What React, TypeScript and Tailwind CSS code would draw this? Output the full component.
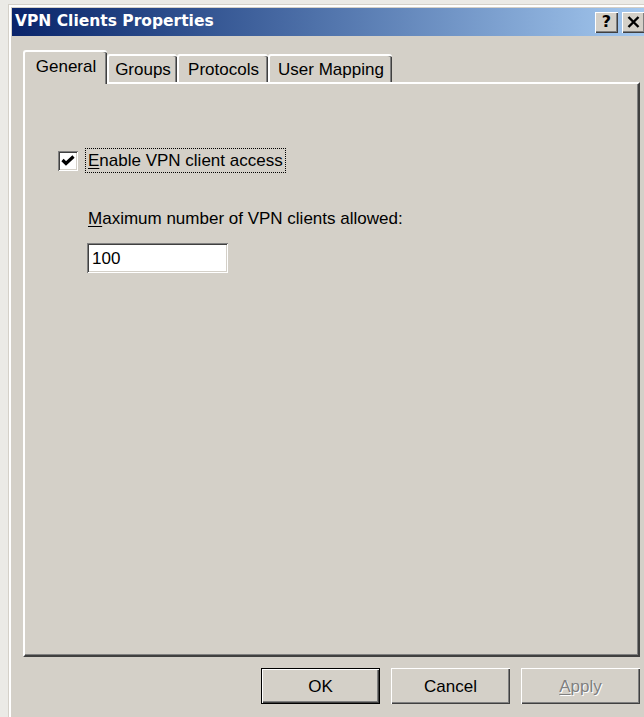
import type { ReactNode } from "react";

// Classic 3D bevels used by the dialog controls
const raised = "shadow-[inset_1px_1px_#ffffff,inset_-1px_-1px_#404040,inset_-2px_-2px_#808080]";
const sunken = "shadow-[inset_1px_1px_#808080,inset_-1px_-1px_#ffffff,inset_2px_2px_#404040,inset_-2px_-2px_#d4d0c8]";

const tabs = [
    { label: "General", width: "w-[84px]", active: true },
    { label: "Groups", width: "w-[70px]", active: false },
    { label: "Protocols", width: "w-[91px]", active: false },
    { label: "User Mapping", width: "w-[124px]", active: false },
];

function CaptionButton({ children }: { children: ReactNode }) {
    return (
        <div className={`flex h-[21px] w-[23px] items-center justify-center bg-[#d4d0c8] ${raised}`}>{children}</div>
    );
}

function Tab({ label, width, active }: { label: string; width: string; active: boolean }) {
    if (active) {
        return (
            <div
                className={`relative z-10 -mb-[2px] h-[34px] ${width} rounded-t-[3px] border-t-2 border-l-2 border-white bg-[#d4d0c8] pt-[6px] text-center leading-[17px] shadow-[inset_-1px_0_#404040,inset_-2px_0_#808080]`}
            >
                {label}
            </div>
        );
    }
    return (
        <div
            className={`h-[28px] ${width} rounded-t-[3px] border-t-2 border-l-2 border-white pt-[5px] text-center leading-[17px] shadow-[inset_-1px_0_#404040,inset_-2px_0_#808080]`}
        >
            {label}
        </div>
    );
}

function DialogButton({ children, isDefault, disabled }: { children: ReactNode; isDefault?: boolean; disabled?: boolean }) {
    return (
        <div
            className={`flex h-[36px] w-[119px] items-center justify-center bg-[#d4d0c8] leading-none ${
                isDefault
                    ? "border border-black shadow-[inset_1px_1px_#ffffff,inset_-1px_-1px_#404040,inset_-2px_-2px_#808080]"
                    : "shadow-[inset_1px_1px_#ffffff,inset_-1px_-1px_#404040,inset_-2px_-2px_#808080]"
            } ${disabled ? "text-[#808080] [text-shadow:1px_1px_0_#ffffff]" : "text-black"}`}
        >
            {children}
        </div>
    );
}

export default function App() {
    return (
        <div className="h-[717px] w-[644px] overflow-hidden bg-[#ebeae6] pt-1 pl-2 font-['Liberation_Sans',Arial,sans-serif] text-[17px] text-black">
            {/* Window frame */}
            <div className="h-[720px] w-[644px] bg-[#d4d0c8] pt-[4px] pl-[4px] shadow-[inset_1px_1px_#d4d0c8,inset_3px_3px_#ffffff]">
                {/* Caption bar */}
                <div className="flex h-[28px] w-[636px] items-center bg-linear-to-r from-[#0a246a] to-[#a6caf0] pr-[3px] pl-[3px]">
                    <span className="flex-1 font-['DejaVu_Sans',sans-serif] text-[15.5px] font-bold text-white">
                        VPN Clients Properties
                    </span>
                    <div className="flex gap-[4px]">
                        <CaptionButton>
                            <span className="font-['DejaVu_Sans',sans-serif] text-[16px] leading-none font-bold">?</span>
                        </CaptionButton>
                        <CaptionButton>
                            <svg width="13" height="12" viewBox="0 0 13 12">
                                <path d="M1.5 1 L11.5 11 M11.5 1 L1.5 11" stroke="#000" strokeWidth="2.4" />
                            </svg>
                        </CaptionButton>
                    </div>
                </div>

                <div className="px-[11px]">
                    {/* Tab strip */}
                    <div className="mt-[14px] flex h-[32px] items-end">
                        {tabs.map((t) => (
                            <Tab key={t.label} {...t} />
                        ))}
                    </div>

                    {/* Tab page */}
                    <div className="h-[575px] w-[617px] border-t-2 border-l-2 border-white border-r-2 border-b-2 border-r-[#404040] border-b-[#404040] pt-[64px] pl-[33px] shadow-[inset_-1px_-1px_#808080]">
                        <div className="flex h-[25px] items-center">
                            <div className={`flex h-[20px] w-[20px] items-center justify-center bg-white ${sunken}`}>
                                <svg width="14" height="14" viewBox="0 0 14 14">
                                    <path d="M1.5 6 L5 9.5 L12.5 2.5" fill="none" stroke="#000" strokeWidth="3.2" />
                                </svg>
                            </div>
                            <div className="ml-[7px] flex h-[25px] items-center border border-dotted border-black px-[2px] leading-none">
                                <span>
                                    <span className="underline underline-offset-2">E</span>nable VPN client access
                                </span>
                            </div>
                        </div>

                        <div className="mt-[36px] ml-[30px] leading-[20px]">
                            <span className="underline underline-offset-2">M</span>aximum number of VPN clients allowed:
                        </div>

                        <div className={`mt-[14px] ml-[29px] flex h-[30px] w-[141px] items-center bg-white pl-[5px] leading-none ${sunken}`}>
                            100
                        </div>
                    </div>

                    {/* Dialog buttons */}
                    <div className="mt-[11px] flex w-[617px] justify-end gap-[11px]">
                        <DialogButton isDefault>OK</DialogButton>
                        <DialogButton>Cancel</DialogButton>
                        <DialogButton disabled>
                            <span>
                                <span className="underline underline-offset-2">A</span>pply
                            </span>
                        </DialogButton>
                    </div>
                </div>
            </div>
        </div>
    );
}
